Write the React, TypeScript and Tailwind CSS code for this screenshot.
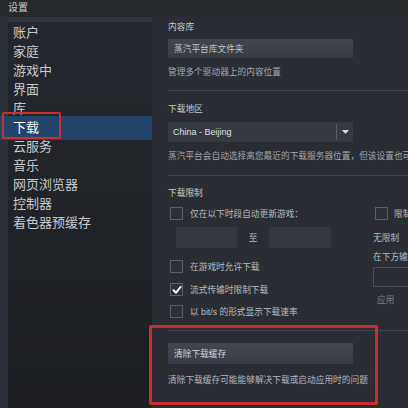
import React from "react";

const items = ["账户", "家庭", "游戏中", "界面", "库", "下载", "云服务", "音乐", "网页浏览器", "控制器", "着色器预缓存"];

function Box({ checked = false }: { checked?: boolean }) {
  return (
    <div className="w-[13px] h-[13px] shrink-0 border border-[#5b5f67] bg-[#2d3037] flex items-center justify-center">
      {checked && (
        <svg width="10" height="10" viewBox="0 0 10 10">
          <path d="M1.5 5.2 L4 7.8 L8.6 1.8" stroke="#f2f2f2" strokeWidth="2" fill="none" strokeLinecap="round" strokeLinejoin="round" />
        </svg>
      )}
    </div>
  );
}

export default function App() {
  return (
    <div className="relative w-[408px] h-[408px] overflow-hidden bg-[#2a2d33] font-['Liberation_Sans','Noto_Sans_CJK_SC',sans-serif] flex flex-col">
      {/* title bar */}
      <div className="h-[16px] shrink-0 flex items-center pl-[8px] bg-[#25282d]">
        <span className="text-[10px] leading-[12px] text-[#c9ccd1]">设置</span>
      </div>
      <div className="flex flex-1 min-h-0">
        {/* sidebar */}
        <div className="w-[152px] shrink-0 flex bg-gradient-to-b from-[#24272d] to-[#1c1e22]">
          <div className="w-[8px] shrink-0 bg-[#2c3038]" />
          <div className="flex-1 flex flex-col">
            <div className="h-[5px] mt-[1px] bg-[#30343b]" />
            <div className="flex flex-col mt-[1.5px]">
              {items.map((t) =>
                t === "下载" ? (
                  <div key={t} className="h-[24px] -my-[2.5px] -ml-[8px] pl-[13px] flex items-center bg-[#22436a] text-[13px] text-white">
                    {t}
                  </div>
                ) : (
                  <div key={t} className="h-[19px] -ml-[8px] pl-[13px] flex items-center text-[13px] text-[#c6c9ce]">
                    {t}
                  </div>
                )
              )}
            </div>
          </div>
        </div>
        {/* content */}
        <div className="flex-1 flex flex-col pl-[16px] text-[8.7px] leading-[12px] whitespace-nowrap">
          <div className="mt-[5px] text-[#c9ccd1]">内容库</div>
          <div className="mt-[6px] w-[185px] h-[19px] bg-gradient-to-b from-[#41454d] to-[#383c44] flex items-center pl-[6px] text-[#c2c6cc]">蒸汽平台库文件夹</div>
          <div className="mt-[8px] text-[#a3a7ae]">管理多个驱动器上的内容位置</div>
          <div className="mt-[12px] h-px bg-[#40444c]" />
          <div className="mt-[12px] text-[#c9ccd1]">下载地区</div>
          <div className="mt-[7px] w-[185px] h-[20px] bg-[#353940] flex items-center">
            <span className="flex-1 pl-[5px] text-[9px] text-[#dde0e4]">China - Beijing</span>
            <div className="w-px h-[16px] bg-[#5a5e66]" />
            <div className="w-[16px] flex items-center justify-center">
              <svg width="7" height="4" viewBox="0 0 7 4"><path d="M0 0 L7 0 L3.5 4 Z" fill="#d8dadd" /></svg>
            </div>
          </div>
          <div className="mt-[8px] text-[#a3a7ae]">蒸汽平台会自动选择离您最近的下载服务器位置，但该设置也可</div>
          <div className="mt-[13px] h-px bg-[#40444c]" />
          <div className="mt-[11px] text-[#c9ccd1]">下载限制</div>
          <div className="mt-[8px] flex">
            <div className="w-[205px] shrink-0 flex flex-col">
              <div className="flex items-center pl-[2px] h-[13px]">
                <Box />
                <span className="ml-[7px] text-[#b9bdc3]">仅在以下时段自动更新游戏：</span>
              </div>
              <div className="mt-[7px] flex items-center pl-[8px]">
                <div className="w-[61px] h-[21px] bg-[#353840]" />
                <span className="w-[32px] text-center text-[#b9bdc3]">至</span>
                <div className="w-[62px] h-[21px] bg-[#353840]" />
              </div>
              <div className="mt-[12px] flex items-center pl-[2px] h-[13px]">
                <Box />
                <span className="ml-[7px] text-[#b9bdc3]">在游戏时允许下载</span>
              </div>
              <div className="mt-[10px] flex items-center pl-[2px] h-[13px]">
                <Box checked />
                <span className="ml-[7px] text-[#b9bdc3]">流式传输时限制下载</span>
              </div>
              <div className="mt-[9px] flex items-center pl-[2px] h-[13px]">
                <Box />
                <span className="ml-[7px] text-[#b9bdc3]">以 bit/s 的形式显示下载速率</span>
              </div>
            </div>
            <div className="flex-1 flex flex-col">
              <div className="flex items-center pl-[2px] h-[13px]">
                <Box />
                <span className="ml-[6px] text-[#b9bdc3]">限制</span>
              </div>
              <div className="mt-[12px] text-[#b9bdc3]">无限制</div>
              <div className="mt-[7px] text-[#b9bdc3]">在下方输</div>
              <div className="mt-[4px] h-[20px] border border-[#4a4e56] border-r-0" />
              <div className="mt-[7px] ml-[4px] text-[#7c8088]">应用</div>
            </div>
          </div>
          <div className="mt-[12px] h-px bg-[#40444c]" />
          <div className="mt-[12px] w-[185px] h-[21px] bg-gradient-to-b from-[#42464e] to-[#383c44] flex items-center pl-[6px] text-[#d2d5da]">清除下载缓存</div>
          <div className="mt-[10px] text-[#b3b7bd]">清除下载缓存可能能够解决下载或启动应用时的问题</div>
        </div>
      </div>
      {/* annotation boxes */}
      <div className="absolute left-[2px] top-[112px] w-[59px] h-[27px] border-2 border-[#c8302d] rounded-[2px]" />
      <div className="absolute left-[149px] top-[325px] w-[229px] h-[80px] border-[3px] border-[#c8302d] rounded-[2px]" />
    </div>
  );
}
